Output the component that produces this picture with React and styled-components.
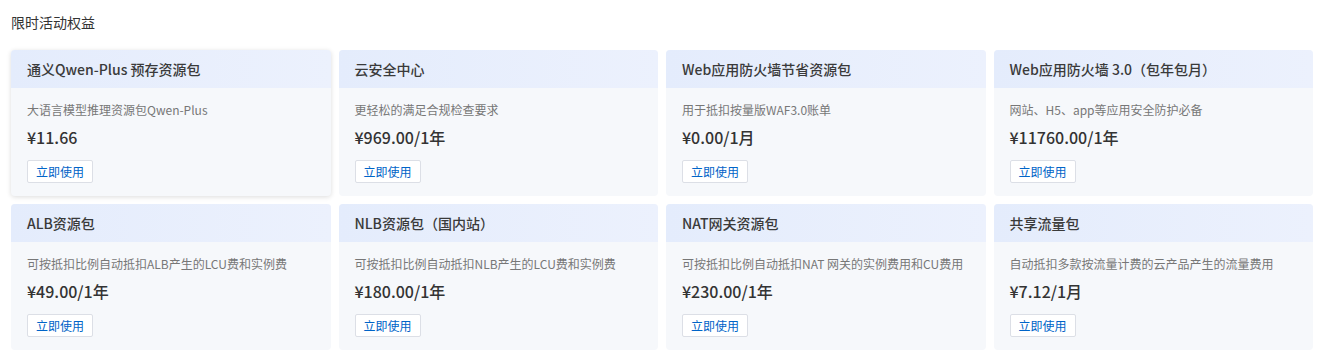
import styled, { createGlobalStyle } from "styled-components";

const GlobalStyle = createGlobalStyle`
  body {
    margin: 0;
    background: #ffffff;
    font-family: "Noto Sans CJK SC", "Noto Sans", sans-serif;
  }
`;

const items = [
  { title: "通义Qwen-Plus 预存资源包", desc: "大语言模型推理资源包Qwen-Plus", price: "¥11.66", active: true },
  { title: "云安全中心", desc: "更轻松的满足合规检查要求", price: "¥969.00/1年" },
  { title: "Web应用防火墙节省资源包", desc: "用于抵扣按量版WAF3.0账单", price: "¥0.00/1月" },
  { title: "Web应用防火墙 3.0（包年包月）", desc: "网站、H5、app等应用安全防护必备", price: "¥11760.00/1年" },
  { title: "ALB资源包", desc: "可按抵扣比例自动抵扣ALB产生的LCU费和实例费", price: "¥49.00/1年" },
  { title: "NLB资源包（国内站）", desc: "可按抵扣比例自动抵扣NLB产生的LCU费和实例费", price: "¥180.00/1年" },
  { title: "NAT网关资源包", desc: "可按抵扣比例自动抵扣NAT 网关的实例费用和CU费用", price: "¥230.00/1年" },
  { title: "共享流量包", desc: "自动抵扣多款按流量计费的云产品产生的流量费用", price: "¥7.12/1月" },
];

export default function App() {
  return (
    <Page>
      <GlobalStyle />
      <Heading>限时活动权益</Heading>
      <Grid>
        {items.map((item, i) => (
          <Card key={i} $active={item.active}>
            <CardHead>{item.title}</CardHead>
            <CardBody>
              <Desc>{item.desc}</Desc>
              <Price>{item.price}</Price>
              <UseButton>立即使用</UseButton>
            </CardBody>
          </Card>
        ))}
      </Grid>
    </Page>
  );
}

const Page = styled.div`
  padding: 12px 10px 0 11px;
`;

const Heading = styled.div`
  font-size: 14px;
  line-height: 20px;
  color: #333;
  margin-bottom: 18px;
`;

const Grid = styled.div`
  display: grid;
  grid-template-columns: repeat(4, 1fr);
  gap: 8px;
`;

const Card = styled.div`
  border-radius: 4px;
  overflow: hidden;
  background: #f6f8fb;
  height: 146px;
  box-shadow: ${(p) => (p.$active ? "0 1px 5px rgba(0, 0, 0, 0.14)" : "none")};
`;

const CardHead = styled.div`
  height: 38px;
  display: flex;
  align-items: center;
  padding: 0 16px;
  font-size: 14px;
  font-weight: 500;
  color: #3a3a3a;
  background: linear-gradient(90deg, #e4ecfc 0%, #ecf1fd 100%);
`;

const CardBody = styled.div`
  padding: 12px 16px 0;
  display: flex;
  flex-direction: column;
  align-items: flex-start;
`;

const Desc = styled.div`
  font-size: 12px;
  line-height: 20px;
  color: #777;
  white-space: nowrap;
`;

const Price = styled.div`
  font-size: 16px;
  line-height: 24px;
  font-weight: 500;
  color: #333;
  margin-top: 5px;
`;

const UseButton = styled.button`
  margin-top: 11px;
  height: 23px;
  padding: 0 8px;
  font-family: inherit;
  font-size: 12px;
  color: #0064c8;
  background: #fff;
  border: 1px solid #dcdfe6;
  border-radius: 2px;
  cursor: pointer;
`;
